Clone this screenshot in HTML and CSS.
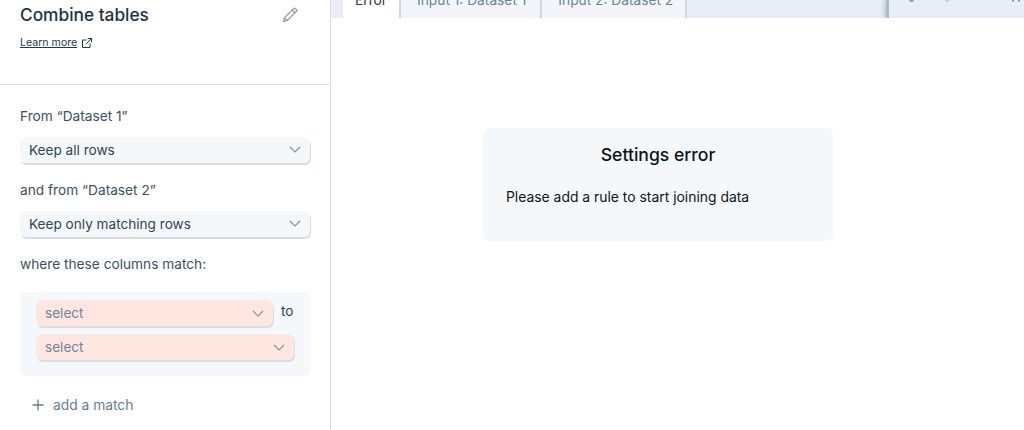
FILE: index.html
```html
<!DOCTYPE html>
<html lang="en">
<head>
<meta charset="utf-8">
<title>Combine tables</title>
<link rel="stylesheet" href="styles.css">
</head>
<body>
<div class="app">
  <aside class="side">
    <header class="head">
      <div class="title-row">
        <h1 class="title">Combine tables</h1>
        <svg class="pencil" width="16" height="16" viewBox="0 0 16 16" fill="none" stroke="#8399ab" stroke-width="1.2" stroke-linejoin="round"><path d="M1.5 14.5l.8-3.6L11.6 1.6a1.3 1.3 0 0 1 1.8 0l1 1a1.3 1.3 0 0 1 0 1.8L5.1 13.7z"/><path d="M10.2 3l2.8 2.8M2.3 10.9l2.8 2.8"/></svg>
      </div>
      <div class="learn"><a class="learn-link">Learn more</a>
        <svg width="10" height="10" viewBox="0 0 10 10" fill="none" stroke="#1f3a4d" stroke-width="1"><path d="M4.5 2H.5v7.5H8V5.5M4 6l5.5-5.5M5.8.5h3.7v3.7"/></svg>
      </div>
    </header>
    <div class="form">
      <div class="label">From “Dataset 1”</div>
      <div class="select"><span>Keep all rows</span><svg class="chev" width="12" height="7" viewBox="0 0 12 7" fill="none" stroke="#7d91a3" stroke-width="1.1"><path d="M1 1l5 5 5-5"/></svg></div>
      <div class="label">and from “Dataset 2”</div>
      <div class="select"><span>Keep only matching rows</span><svg class="chev" width="12" height="7" viewBox="0 0 12 7" fill="none" stroke="#7d91a3" stroke-width="1.1"><path d="M1 1l5 5 5-5"/></svg></div>
      <div class="label">where these columns match:</div>
      <div class="match">
        <div class="match-row">
          <div class="select error short"><span>select</span><svg class="chev" width="12" height="7" viewBox="0 0 12 7" fill="none" stroke="#7d91a3" stroke-width="1.1"><path d="M1 1l5 5 5-5"/></svg></div>
          <span class="to">to</span>
        </div>
        <div class="select error"><span>select</span><svg class="chev" width="12" height="7" viewBox="0 0 12 7" fill="none" stroke="#7d91a3" stroke-width="1.1"><path d="M1 1l5 5 5-5"/></svg></div>
      </div>
      <div class="add">
        <svg width="12" height="12" viewBox="0 0 12 12" fill="none" stroke="#5f7d99" stroke-width="1.3"><path d="M6 .5v11M.5 6h11"/></svg>
        <span>add a match</span>
      </div>
    </div>
  </aside>
  <main class="main">
    <nav class="tabs">
      <div class="tab active">Error</div>
      <div class="tab">Input 1: Dataset 1</div>
      <div class="tab tab-last">Input 2: Dataset 2</div>
      <div class="spacer"></div>
      <div class="tools">
        <span class="tool tool-a"></span><span class="tool tool-b"></span><span class="tool tool-c"></span><span class="tool tool-d"></span>
      </div>
    </nav>
    <section class="content">
      <div class="card">
        <h2 class="card-title">Settings error</h2>
        <p class="card-text">Please add a rule to start joining data</p>
      </div>
    </section>
  </main>
</div>
</body>
</html>
```
FILE: styles.css
```css
* { box-sizing: border-box; }
html, body { margin: 0; height: 100%; background: #fff; overflow: hidden; }
body { font-family: Inter, "Liberation Sans", sans-serif; color: #1f3a4d; }
.app { display: flex; width: 1024px; height: 430px; }
.side { width: 331px; flex: none; border-right: 1px solid #d9dfe5; }
.head { height: 85px; border-bottom: 1px solid #d9dfe5; padding: 3px 32px 0 20px; }
.title-row { display: flex; justify-content: space-between; align-items: center; height: 24px; }
.title { margin: 0; font-size: 17.3px; line-height: 24px; font-weight: 500; color: #1b3547; }
.pencil { flex: none; }
.learn { display: flex; align-items: center; gap: 5px; margin-top: 8px; height: 16px; }
.learn-link { font-size: 10.6px; line-height: 16px; text-decoration: underline; color: #1f3a4d; }
.form { padding: 22px 20px 0 20px; }
.label { font-size: 13.7px; line-height: 18px; color: #3b5061; margin-bottom: 12px; }
.select { display: flex; justify-content: space-between; align-items: center; height: 26px; padding: 0 9px 1px 9px; background: #f4f8fb; border-radius: 6px; box-shadow: 1px 2px 0 #d5dee8; font-size: 13.6px; color: #2c4557; margin-bottom: 18px; }
.match { background: #f4f8fb; border-radius: 6px; padding: 8px 16px 16px; margin-top: 19px; }
.match .select { background: #ffe6e0; color: #6f8499; margin: 0; padding-bottom: 0; }
.match-row { display: flex; align-items: flex-start; gap: 8px; margin-bottom: 8px; }
.short { flex: 1; }
.to { font-size: 13.6px; line-height: 22px; color: #2c4557; width: 13px; }
.add { display: flex; align-items: center; gap: 9px; margin: 20px 0 0 12px; font-size: 13.8px; line-height: 18px; color: #5f7d99; }
.main { flex: 1; display: flex; flex-direction: column; min-width: 0; }
.tabs { display: flex; height: 18px; background: #e9eef6; overflow: hidden; }
.tab { padding: 3px 14px 0 16px; margin-top: -12px; font-size: 13.75px; line-height: 18px; height: 30px; color: #6f8499; background: #f2f6fa; border-right: 2px solid #cfd8e3; white-space: nowrap; }
.tab.active { background: #fff; color: #1f3a4d; margin-left: 12px; padding: 3px 12px 0 12px; }
.tab-last { padding-right: 12px; }
.spacer { flex: 1; }
.tools { position: relative; width: 138px; flex: none; background: #e9eef6; border-left: 3px solid #a9bcc8; box-shadow: -3px 0 3px rgba(170, 190, 200, 0.5); }
.tool { position: absolute; top: 0; height: 2px; background: #8fa3b0; border-radius: 0 0 2px 2px; }
.tool-a { left: 20px; width: 5px; }
.tool-b { left: 56px; width: 4px; background: #bcd0d8; }
.tool-c { left: 123px; width: 2px; }
.tool-d { left: 129px; width: 2px; }
.content { flex: 1; display: flex; justify-content: center; padding: 110px 39px 0 0; }
.card { width: 350px; height: 113px; background: #f4f8fb; border-radius: 6px; padding: 16px 23px; color: #0f1418; }
.card-title { margin: 0; font-size: 17.6px; line-height: 22px; font-weight: 500; text-align: center; }
.card-text { margin: 22px 0 0; font-size: 13.9px; line-height: 18px; }
```
